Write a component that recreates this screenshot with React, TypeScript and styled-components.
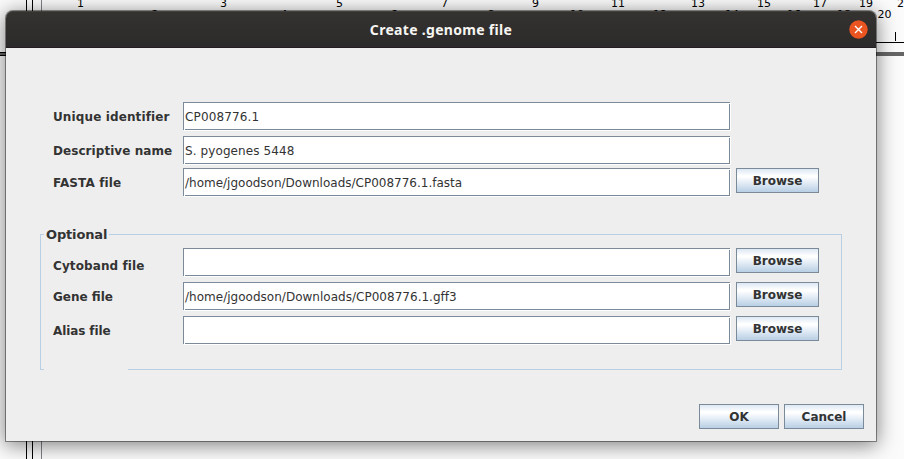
import React from "react";
import styled, { createGlobalStyle } from "styled-components";

const GlobalStyle = createGlobalStyle`
  * { box-sizing: border-box; }
  html, body { margin: 0; padding: 0; }
  body { overflow: hidden; background: #fbfbfb; }
`;

const Screen = styled.div`
  position: relative;
  width: 904px;
  height: 459px;
  overflow: hidden;
  background: #fbfbfb;
  padding: 10px 0 0 5px;
  font-family: "DejaVu Sans", sans-serif;
`;

const Backdrop = styled.svg`
  position: absolute;
  left: 0;
  top: 0;
  text {
    font: 11px "DejaVu Sans", sans-serif;
    text-anchor: middle;
  }
`;

const Dialog = styled.div`
  position: relative;
  width: 872px;
  height: 432px;
  border: 1px solid rgba(0, 0, 0, 0.4);
  border-radius: 8px 8px 0 0;
  background: #eeeeee;
  background-clip: padding-box;
  box-shadow: 0 3px 20px rgba(0, 0, 0, 0.5);
`;

const TitleBar = styled.div`
  display: flex;
  align-items: center;
  height: 37px;
  padding: 0 8px 0 9px;
  border-radius: 7px 7px 0 0;
  border-bottom: 1px solid #231c20;
  background: linear-gradient(#343330, #2d2a2b);
  box-shadow: inset 0 1px 0 #42413d;
`;

const Title = styled.div`
  flex: 1;
  padding-left: 18px;
  text-align: center;
  color: #f6f5f1;
  font: bold 14px "Noto Sans", sans-serif;
  letter-spacing: 0.3px;
`;

const CloseButton = styled.svg`
  display: block;
  width: 19px;
  height: 19px;
`;

const Body = styled.div`
  position: relative;
  display: flex;
  flex-direction: column;
  height: 393px;
  padding: 54px 12px 12px 34px;
  color: #333333;
`;

const Rows = styled.div<{ $inset?: boolean }>`
  display: flex;
  flex-direction: column;
  padding-left: ${(p) => (p.$inset ? 12 : 13)}px;
`;

const Row = styled.div<{ $gap: number }>`
  display: flex;
  align-items: flex-start;
  height: 29px;
  margin-bottom: ${(p) => p.$gap}px;
`;

const Label = styled.label<{ $drop: number; $spacing: number }>`
  width: 130px;
  padding-top: ${(p) => p.$drop}px;
  font-size: 12px;
  font-weight: bold;
  letter-spacing: ${(p) => p.$spacing}px;
  line-height: 16px;
  white-space: nowrap;
`;

const Field = styled.div<{ $spacing: number }>`
  width: 548px;
  height: 29px;
  flex: none;
  padding: 7px 2px 5px;
  font-size: 12px;
  letter-spacing: ${(p) => p.$spacing}px;
  line-height: 17px;
  white-space: nowrap;
  background:
    linear-gradient(#7a8a99, #7a8a99) 0 0 / 547px 1px no-repeat,
    linear-gradient(#7a8a99, #7a8a99) 0 0 / 1px 28px no-repeat,
    linear-gradient(#7a8a99, #7a8a99) 546px 2px / 1px 26px no-repeat,
    linear-gradient(#7a8a99, #7a8a99) 2px 27px / 545px 1px no-repeat,
    linear-gradient(#eeeeee, #eeeeee) 547px 0 / 1px 1px no-repeat,
    linear-gradient(#eeeeee, #eeeeee) 0 28px / 1px 1px no-repeat,
    #ffffff;
`;

const Button = styled.button<{ $width: number }>`
  flex: none;
  width: ${(p) => p.$width}px;
  height: 25px;
  padding: 0;
  border: 1px solid #7a8a99;
  border-radius: 0;
  background: linear-gradient(#dde8f3 0%, #ffffff 30%, #ffffff 34%, #b8cfe5 100%);
  color: #333333;
  font: bold 12px/22px "DejaVu Sans", sans-serif;
`;

const BrowseButton = styled(Button)`
  margin-left: 5px;
`;

const OptionalGroup = styled.section`
  display: flex;
  flex-direction: column;
  width: 802px;
  height: 145px;
  margin-top: 28px;
`;

const GroupTop = styled.div`
  display: flex;
  height: 18px;
`;

const GroupCorner = styled.div`
  width: 4px;
  margin-top: 9px;
  border: solid #b8cfe5;
  border-width: 1px 0 0 1px;
`;

const GroupTitle = styled.div`
  width: 65px;
  padding-left: 2px;
  font-size: 13px;
  font-weight: bold;
  letter-spacing: -0.15px;
  line-height: 20px;
`;

const GroupLine = styled.div`
  flex: 1;
  margin-top: 9px;
  border: solid #b8cfe5;
  border-width: 1px 1px 0 0;
`;

const GroupContent = styled.div`
  height: 126px;
  padding-top: 5px;
  border: solid #b8cfe5;
  border-width: 0 1px 0 1px;
`;

const GroupBottom = styled.div`
  height: 1px;
  background: linear-gradient(90deg, #b8cfe5 4px, transparent 4px, transparent 88px, #b8cfe5 88px);
`;

const Actions = styled.div`
  display: flex;
  justify-content: flex-end;
  gap: 5px;
  margin-top: auto;
`;

const ticks: [string, number, number][] = [
  ["1", 80.5, 7], ["3", 223.5, 7], ["5", 339.5, 7], ["7", 444.5, 7], ["9", 535.5, 7],
  ["11", 618, 7], ["13", 698, 7], ["15", 764, 7], ["17", 820, 7], ["19", 866, 7], ["21", 904, 7],
  ["2", 155, 18], ["4", 284, 18], ["6", 394, 18], ["8", 491, 18], ["10", 577, 18],
  ["12", 660, 18], ["14", 732, 18], ["16", 794, 18], ["18", 844, 18], ["20", 884.5, 18],
];

const Ruler = () => (
  <Backdrop width="904" height="459" shapeRendering="crispEdges">
    <rect x="26" width="1" height="459" />
    <rect x="32" width="1" height="459" />
    <rect x="41" width="1" height="459" fill="#808088" />
    <rect x="42" y="42" width="862" height="1" />
    <rect y="52" width="904" height="4" fill="#666" />
    <rect y="52" width="10" height="1" />
    <rect y="55" width="10" height="1" />
    <rect x="895" y="32" width="1" height="9" />
    {ticks.map(([value, x, y]) => (
      <text key={value} x={x} y={y}>{value}</text>
    ))}
  </Backdrop>
);

interface FileRowProps {
  label: string;
  value?: string;
  drop?: number;
  gap?: number;
  labelSpacing?: number;
  valueSpacing?: number;
  browse?: boolean;
}

const FileRow = ({
  label, value, drop = 7, gap = 5, labelSpacing = 0, valueSpacing = 0, browse,
}: FileRowProps) => (
  <Row $gap={gap}>
    <Label $drop={drop} $spacing={labelSpacing}>{label}</Label>
    <Field $spacing={valueSpacing}>{value}</Field>
    {browse && <BrowseButton $width={83}>Browse</BrowseButton>}
  </Row>
);

export default function App() {
  return (
    <>
      <GlobalStyle />
      <Screen>
        <Ruler />
        <Dialog>
          <TitleBar>
            <Title>Create .genome file</Title>
            <CloseButton viewBox="0 0 19 19">
              <circle cx="9.5" cy="9.5" r="9.2" fill="#e95420" />
              <path d="M6 6 L13 13 M13 6 L6 13" stroke="#fff" strokeWidth="1.4" />
            </CloseButton>
          </TitleBar>
          <Body>
            <Rows>
              <FileRow label="Unique identifier" value="CP008776.1" labelSpacing={0.12} valueSpacing={0.15} />
              <FileRow label="Descriptive name" value="S. pyogenes 5448" gap={3} labelSpacing={0.06} valueSpacing={0.1} />
              <FileRow label="FASTA file" value="/home/jgoodson/Downloads/CP008776.1.fasta" gap={0} labelSpacing={0.12} browse />
            </Rows>
            <OptionalGroup>
              <GroupTop>
                <GroupCorner />
                <GroupTitle>Optional</GroupTitle>
                <GroupLine />
              </GroupTop>
              <GroupContent>
                <Rows $inset>
                  <FileRow label="Cytoband file" drop={10} labelSpacing={0.1} browse />
                  <FileRow label="Gene file" value="/home/jgoodson/Downloads/CP008776.1.gff3" valueSpacing={0.02} browse />
                  <FileRow label="Alias file" labelSpacing={-0.1} browse />
                </Rows>
              </GroupContent>
              <GroupBottom />
            </OptionalGroup>
            <Actions>
              <Button $width={80}>OK</Button>
              <Button $width={80}>Cancel</Button>
            </Actions>
          </Body>
        </Dialog>
      </Screen>
    </>
  );
}
